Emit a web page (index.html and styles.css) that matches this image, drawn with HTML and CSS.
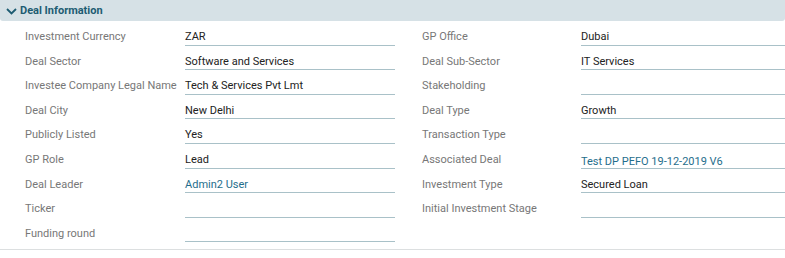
FILE: index.html
```html
<!DOCTYPE html>
<html lang="en">
<head>
    <meta charset="UTF-8">
    <title>Deal Information</title>
    <link rel="stylesheet" href="styles.css">
</head>
<body>
    <div class="section">
        <div class="section-header">
            <svg class="chevron" width="11" height="7" viewBox="0 0 11 7"><path d="M1 1 L5.5 5.5 L10 1" fill="none" stroke="#1d5c72" stroke-width="1.8"/></svg>
            <span>Deal Information</span>
        </div>

        <div class="fields">
            <div class="column">
                <div class="field"><div class="label">Investment Currency</div><div class="value">ZAR</div></div>
                <div class="field"><div class="label">Deal Sector</div><div class="value">Software and Services</div></div>
                <div class="field"><div class="label">Investee Company Legal Name</div><div class="value">Tech &amp; Services Pvt Lmt</div></div>
                <div class="field"><div class="label">Deal City</div><div class="value">New Delhi</div></div>
                <div class="field"><div class="label">Publicly Listed</div><div class="value">Yes</div></div>
                <div class="field"><div class="label">GP Role</div><div class="value">Lead</div></div>
                <div class="field"><div class="label">Deal Leader</div><div class="value link">Admin2 User</div></div>
                <div class="field"><div class="label">Ticker</div><div class="value"></div></div>
                <div class="field"><div class="label">Funding round</div><div class="value"></div></div>
            </div>
            <div class="column">
                <div class="field"><div class="label">GP Office</div><div class="value">Dubai</div></div>
                <div class="field"><div class="label">Deal Sub-Sector</div><div class="value">IT Services</div></div>
                <div class="field"><div class="label">Stakeholding</div><div class="value"></div></div>
                <div class="field"><div class="label">Deal Type</div><div class="value">Growth</div></div>
                <div class="field"><div class="label">Transaction Type</div><div class="value"></div></div>
                <div class="field"><div class="label">Associated Deal</div><div class="value link low">Test DP PEFO 19-12-2019 V6</div></div>
                <div class="field"><div class="label">Investment Type</div><div class="value">Secured Loan</div></div>
                <div class="field"><div class="label">Initial Investment Stage</div><div class="value"></div></div>
            </div>
        </div>
    </div>
</body>
</html>
```

FILE: styles.css
```css
body {
    margin: 0;
    font-family: Roboto, "Liberation Sans", sans-serif;
    font-size: 11px;
    background: #fff;
}
.section {
    border-bottom: 1px solid #dcdfe0;
    padding-bottom: 7px;
}
.section-header {
    height: 21px;
    background-color: #d6e1e6;
    border-radius: 0 0 3px 3px;
    display: flex;
    align-items: center;
    padding-left: 6px;
    color: #1d5c72;
    font-size: 11px;
    font-weight: bold;
}
.chevron {
    margin-right: 3px;
    margin-top: 1px;
}
.fields {
    display: flex;
    padding-left: 25px;
    gap: 27px;
}
.column {
    display: flex;
    flex-direction: column;
}
.column:first-child {
    width: 370px;
}
.column:last-child {
    flex: 1;
}
.field {
    display: flex;
    height: 24.6px;
}
.label {
    width: 160px;
    flex-shrink: 0;
    color: #777;
    line-height: 14px;
    padding-top: 9px;
    white-space: nowrap;
}
.column:last-child .label {
    width: 159px;
}
.value {
    flex: 1;
    border-bottom: 1px solid #a9c1c8;
    color: #222;
    line-height: 14px;
    padding-top: 9px;
}
.value.link {
    color: #1f6e8c;
}
.value.low {
    padding-top: 11px;
}
```
